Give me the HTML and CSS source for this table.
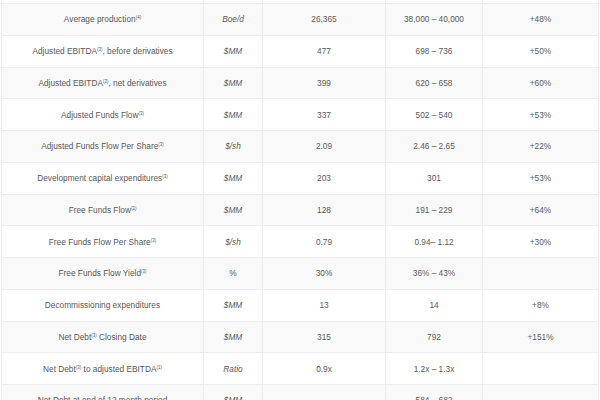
FILE: index.html
```html
<!DOCTYPE html>
<html>
<head>
<meta charset="utf-8">
<link rel="stylesheet" href="styles.css">
</head>
<body>
<div class="wrap">
<table class="guide">
  <colgroup>
    <col class="c-metric"><col class="c-unit"><col class="c-base"><col class="c-proj"><col class="c-chg">
  </colgroup>
  <tbody>
    <tr class="prev"><td></td><td></td><td></td><td></td><td></td></tr>
    <tr class="alt"><td>Average production<sup>(4)</sup></td><td class="unit">Boe/d</td><td>26,365</td><td>38,000 – 40,000</td><td>+48%</td></tr>
    <tr><td>Adjusted EBITDA<sup>(3)</sup>, before derivatives</td><td class="unit">$MM</td><td>477</td><td>698 – 736</td><td>+50%</td></tr>
    <tr class="alt"><td>Adjusted EBITDA<sup>(3)</sup>, net derivatives</td><td class="unit">$MM</td><td>399</td><td>620 – 658</td><td>+60%</td></tr>
    <tr><td>Adjusted Funds Flow<sup>(3)</sup></td><td class="unit">$MM</td><td>337</td><td>502 – 540</td><td>+53%</td></tr>
    <tr class="alt"><td>Adjusted Funds Flow Per Share<sup>(3)</sup></td><td class="unit">$/sh</td><td>2.09</td><td>2.46 – 2.65</td><td>+22%</td></tr>
    <tr><td>Development capital expenditures<sup>(3)</sup></td><td class="unit">$MM</td><td>203</td><td>301</td><td>+53%</td></tr>
    <tr class="alt"><td>Free Funds Flow<sup>(3)</sup></td><td class="unit">$MM</td><td>128</td><td>191 – 229</td><td>+64%</td></tr>
    <tr><td>Free Funds Flow Per Share<sup>(3)</sup></td><td class="unit">$/sh</td><td>0.79</td><td>0.94– 1.12</td><td>+30%</td></tr>
    <tr class="alt"><td>Free Funds Flow Yield<sup>(3)</sup></td><td>%</td><td>30%</td><td>36% – 43%</td><td></td></tr>
    <tr><td>Decommissioning expenditures</td><td class="unit">$MM</td><td>13</td><td>14</td><td>+8%</td></tr>
    <tr class="alt"><td>Net Debt<sup>(3)</sup> Closing Date</td><td class="unit">$MM</td><td>315</td><td>792</td><td>+151%</td></tr>
    <tr><td>Net Debt<sup>(3)</sup> to adjusted EBITDA<sup>(1)</sup></td><td class="unit">Ratio</td><td>0.9x</td><td>1.2x – 1.3x</td><td></td></tr>
    <tr class="alt"><td>Net Debt at end of 12 month period</td><td class="unit">$MM</td><td></td><td>584 – 682</td><td></td></tr>
  </tbody>
</table>
</div>
</body>
</html>
```
FILE: styles.css
```css
html, body {
  margin: 0;
  padding: 0;
  background: #ffffff;
  overflow: hidden;
}
.wrap {
  padding-left: 1px;
  height: 400px;
  overflow: hidden;
}
.guide {
  border-collapse: collapse;
  table-layout: fixed;
  width: 597px;
  margin-top: -28.75px;
  font-family: "Liberation Sans", Arial, sans-serif;
  font-size: 8.3px;
  color: #595959;
}
.c-metric { width: 202px; }
.c-unit { width: 59px; }
.c-base { width: 123px; }
.c-proj { width: 97px; }
.c-chg { width: 116px; }
.guide tr { height: 31.75px; }
.guide td {
  border: 1px solid #ededed;
  text-align: center;
  vertical-align: middle;
  padding: 0 4px;
  white-space: nowrap;
}
.guide tr.alt td { background: #f9f9f9; }
.guide td.unit { font-style: italic; }
.guide sup {
  font-size: 4.5px;
  vertical-align: 3px;
  line-height: 0;
}
```
